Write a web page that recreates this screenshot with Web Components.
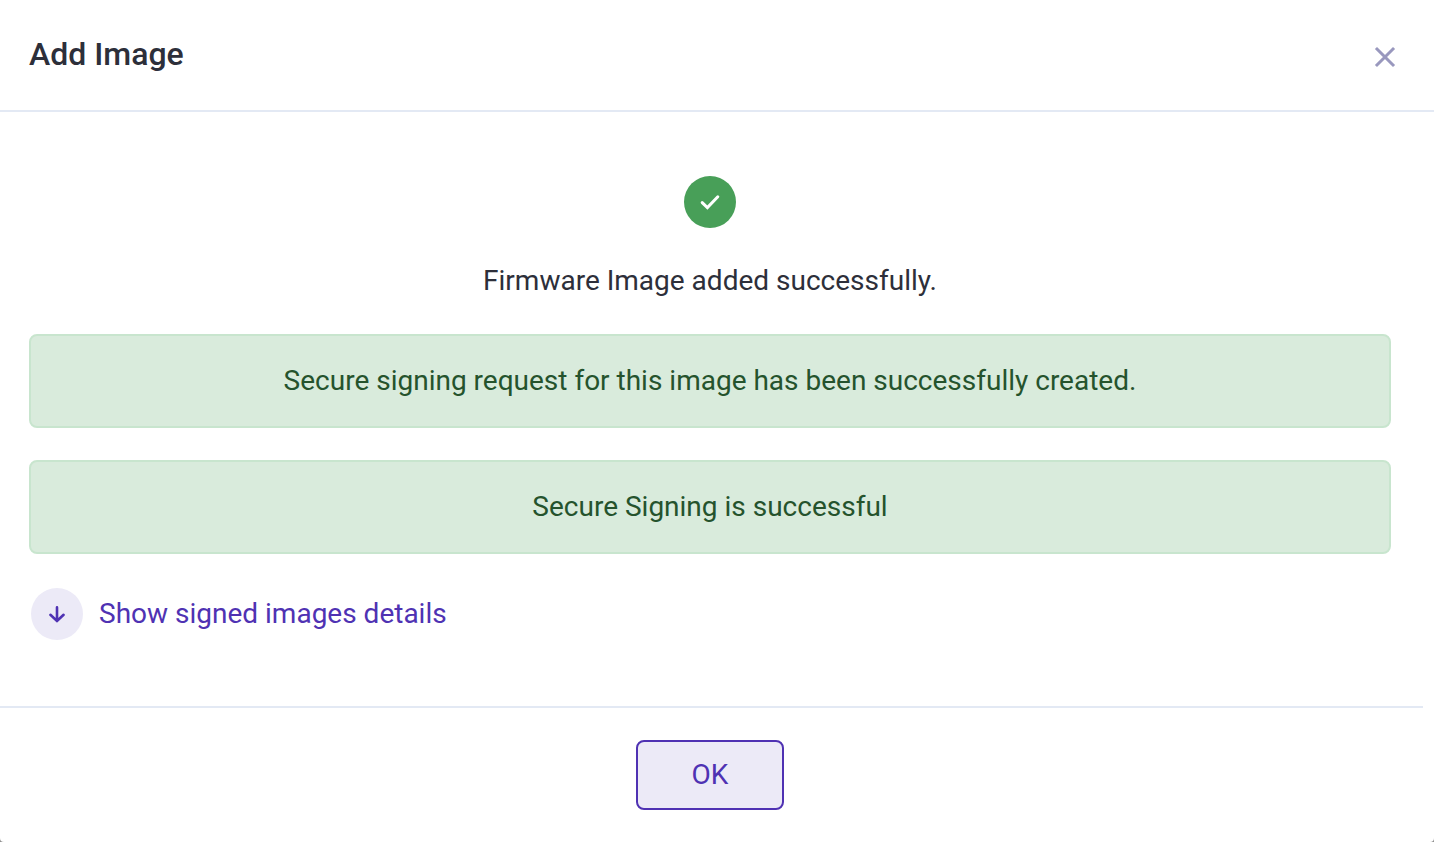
<!DOCTYPE html>
<html lang="en">
<head>
  <meta charset="UTF-8">
  <meta name="viewport" content="width=device-width, initial-scale=1.0">
  <title>Add Image</title>
  <style>
    body {
      margin: 0;
      background: #8f8f8f;
      font-family: Roboto, "Liberation Sans", sans-serif;
      font-size: 28px;
      line-height: 42px;
      color: #2d2f3a;
      --purple: #4f32b3;
      --purple-light: #eceaf7;
      --line: #e3e9f4;
    }
  </style>
</head>
<body>
  <modal-dialog>
    <span slot="title">Add Image</span>
    <success-status>Firmware Image added successfully.</success-status>
    <alert-box>Secure signing request for this image has been successfully created.</alert-box>
    <alert-box>Secure Signing is successful</alert-box>
    <details-toggle>Show signed images details</details-toggle>
    <outline-button slot="footer">OK</outline-button>
  </modal-dialog>

  <script>
    class ModalDialog extends HTMLElement {
      constructor() {
        super();
        this.attachShadow({ mode: "open" });

        this.shadowRoot.innerHTML = `
          <style>
            :host {
              display: flex;
              flex-direction: column;
              box-sizing: border-box;
              min-height: 100vh;
              background: #fff;
              border-radius: 0 0 4px 4px;
            }

            header {
              display: flex;
              align-items: center;
              justify-content: space-between;
              padding: 32px 36px 34px 29px;
              border-bottom: 2px solid var(--line);
            }

            h1 {
              margin: 0;
              font-size: 32px;
              font-weight: 500;
              line-height: 44px;
            }

            .close {
              display: flex;
              padding: 6px 0 0;
              border: none;
              background: none;
              cursor: pointer;
            }

            .content {
              display: flex;
              flex-direction: column;
              flex-grow: 1;
              margin-right: 11px;
            }

            main {
              display: flex;
              flex-direction: column;
              flex-grow: 1;
              gap: 32px;
              padding: 64px 32px 64px 29px;
            }

            footer {
              display: flex;
              justify-content: center;
              padding: 32px 32px 32px 29px;
              border-top: 2px solid var(--line);
            }
          </style>

          <header>
            <h1><slot name="title"></slot></h1>
            <button class="close" type="button" aria-label="Close">
              <svg width="26" height="26" viewBox="0 0 26 26" fill="none" stroke="#9998be" stroke-width="3" stroke-linecap="square">
                <path d="M5 5L21 21M21 5L5 21"/>
              </svg>
            </button>
          </header>
          <div class="content">
            <main><slot></slot></main>
            <footer><slot name="footer"></slot></footer>
          </div>
        `;
      }
    }

    class SuccessStatus extends HTMLElement {
      constructor() {
        super();
        this.attachShadow({ mode: "open" });

        this.shadowRoot.innerHTML = `
          <style>
            :host {
              display: flex;
              flex-direction: column;
              align-items: center;
              gap: 32px;
              text-align: center;
            }

            .circle {
              display: grid;
              place-items: center;
              width: 52px;
              height: 52px;
              border-radius: 50%;
              background: #489f58;
            }
          </style>

          <div class="circle">
            <svg width="26" height="26" viewBox="0 0 26 26" fill="none" stroke="#fff" stroke-width="3" stroke-linecap="round">
              <path d="M5.2 13.6L10.4 18.6L20.8 7.8" stroke-linejoin="miter"/>
            </svg>
          </div>
          <div><slot></slot></div>
        `;
      }
    }

    class AlertBox extends HTMLElement {
      constructor() {
        super();
        this.attachShadow({ mode: "open" });

        this.shadowRoot.innerHTML = `
          <style>
            :host {
              display: block;
              padding: 24px;
              border: 2px solid #c8e5ce;
              border-radius: 8px;
              background: #d9ebdc;
              color: #25532d;
              text-align: center;
            }
          </style>

          <div role="status"><slot></slot></div>
        `;
      }
    }

    class DetailsToggle extends HTMLElement {
      constructor() {
        super();
        this.attachShadow({ mode: "open" });

        this.shadowRoot.innerHTML = `
          <style>
            :host {
              display: block;
              padding: 2px;
            }

            button {
              display: flex;
              align-items: center;
              gap: 16px;
              padding: 0;
              border: none;
              background: none;
              color: var(--purple);
              font: inherit;
              cursor: pointer;
            }

            .circle {
              display: grid;
              place-items: center;
              width: 52px;
              height: 52px;
              border-radius: 50%;
              background: var(--purple-light);
            }
          </style>

          <button type="button" aria-expanded="false">
            <span class="circle">
              <svg width="26" height="26" viewBox="0 0 26 26" fill="none" stroke="currentColor" stroke-width="2.6" stroke-linecap="round">
                <path d="M13 6.4V20M6.4 13.8L13 20L19.6 13.8"/>
              </svg>
            </span>
            <span><slot></slot></span>
          </button>
        `;
      }
    }

    class OutlineButton extends HTMLElement {
      constructor() {
        super();
        this.attachShadow({ mode: "open" });

        this.shadowRoot.innerHTML = `
          <style>
            :host {
              display: block;
            }

            button {
              display: block;
              min-width: 148px;
              padding: 12px 32px;
              border: 2px solid var(--purple);
              border-radius: 8px;
              background: var(--purple-light);
              color: var(--purple);
              font: inherit;
              cursor: pointer;
            }
          </style>

          <button type="button"><slot></slot></button>
        `;
      }
    }

    customElements.define("modal-dialog", ModalDialog);
    customElements.define("success-status", SuccessStatus);
    customElements.define("alert-box", AlertBox);
    customElements.define("details-toggle", DetailsToggle);
    customElements.define("outline-button", OutlineButton);
  </script>
</body>
</html>
